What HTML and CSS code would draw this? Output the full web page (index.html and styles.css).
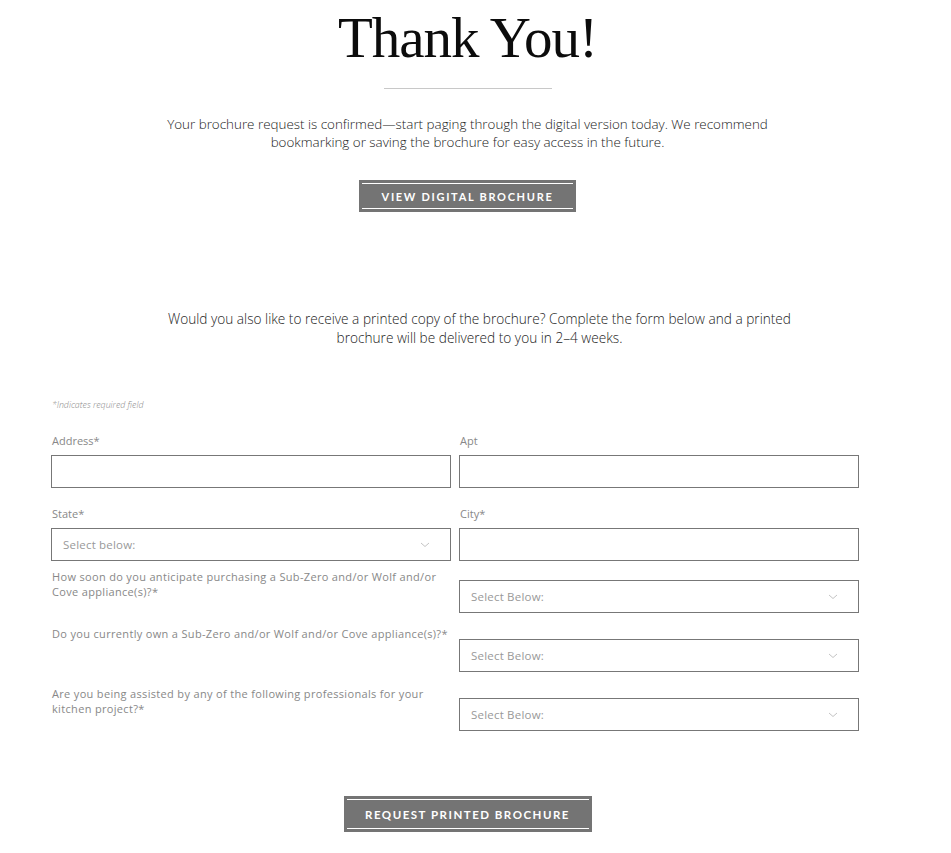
FILE: index.html
```html
<!DOCTYPE html>
<html lang="en">
<head>
<meta charset="utf-8">
<title>Thank You</title>
<link rel="stylesheet" href="styles.css">
</head>
<body>
<main class="page">
  <section class="hero">
    <h1 class="title">Thank You!</h1>
    <hr class="divider">
    <p class="lead">Your brochure request is confirmed—start paging through the digital version today. We recommend<br>bookmarking or saving the brochure for easy access in the future.</p>
    <a class="btn btn-view" href="#">VIEW DIGITAL BROCHURE</a>
  </section>

  <section class="printed">
    <p class="lead lead-2">Would you also like to receive a printed copy of the brochure? Complete the form below and a printed<br>brochure will be delivered to you in 2–4 weeks.</p>
  </section>

  <form class="form">
    <p class="note">*Indicates required field</p>
    <div class="grid">
      <div class="field">
        <label class="label">Address*</label>
        <div class="box"></div>
      </div>
      <div class="field">
        <label class="label">Apt</label>
        <div class="box"></div>
      </div>
      <div class="field">
        <label class="label">State*</label>
        <div class="box select"><span class="ph">Select below:</span><svg class="chev" width="10" height="6" viewBox="0 0 10 6"><path d="M1 1 L5 4.5 L9 1" fill="none" stroke="#c4c4c4" stroke-width="1"/></svg></div>
      </div>
      <div class="field">
        <label class="label">City*</label>
        <div class="box"></div>
      </div>
    </div>
    <div class="qrow q1">
      <p class="qlabel">How soon do you anticipate purchasing a Sub-Zero and/or Wolf and/or Cove appliance(s)?*</p>
      <div class="box select"><span class="ph">Select Below:</span><svg class="chev" width="10" height="6" viewBox="0 0 10 6"><path d="M1 1 L5 4.5 L9 1" fill="none" stroke="#c4c4c4" stroke-width="1"/></svg></div>
    </div>
    <div class="qrow q2">
      <p class="qlabel">Do you currently own a Sub-Zero and/or Wolf and/or Cove appliance(s)?*</p>
      <div class="box select"><span class="ph">Select Below:</span><svg class="chev" width="10" height="6" viewBox="0 0 10 6"><path d="M1 1 L5 4.5 L9 1" fill="none" stroke="#c4c4c4" stroke-width="1"/></svg></div>
    </div>
    <div class="qrow q3">
      <p class="qlabel">Are you being assisted by any of the following professionals for your kitchen project?*</p>
      <div class="box select"><span class="ph">Select Below:</span><svg class="chev" width="10" height="6" viewBox="0 0 10 6"><path d="M1 1 L5 4.5 L9 1" fill="none" stroke="#c4c4c4" stroke-width="1"/></svg></div>
    </div>
  </form>

  <div class="submit">
    <a class="btn btn-request" href="#">REQUEST PRINTED BROCHURE</a>
  </div>
</main>
</body>
</html>
```

FILE: styles.css
```css
* { box-sizing: border-box; }
html, body { margin: 0; padding: 0; background: #fff; }
body {
  font-family: "Open Sans", "Liberation Sans", sans-serif;
  color: #333;
  width: 935px;
}
.page { display: flex; flex-direction: column; }

.hero { display: flex; flex-direction: column; align-items: center; }
.title {
  font-family: "Liberation Serif", "DejaVu Serif", serif;
  font-weight: 400;
  font-size: 57px;
  line-height: 1;
  letter-spacing: -1px;
  color: #0c0c0c;
  margin: 9px 0 0 0;
}
.divider {
  width: 168px;
  border: 0;
  border-top: 1px solid #c8c8c8;
  margin: 22px 0 0 0;
}
.lead {
  font-size: 13.4px;
  font-weight: 300;
  line-height: 18px;
  text-align: center;
  color: #222;
  margin: 26px 0 0 0;
}
.btn {
  display: inline-flex;
  align-items: center;
  justify-content: center;
  background: #747474;
  color: #fff;
  text-decoration: none;
  font-family: "Lato", "Liberation Sans", sans-serif;
  font-weight: 700;
  letter-spacing: 1.7px;
  position: relative;
}
.btn::before, .btn::after {
  content: "";
  position: absolute;
  left: 3px; right: 3px;
  height: 1px;
  background: #fff;
}
.btn::before { top: 3px; }
.btn::after { bottom: 3px; }
.btn-view {
  width: 217px;
  height: 32px;
  font-size: 11px;
  margin-top: 29px;
}

.printed {
  display: flex;
  justify-content: center;
  margin-top: 97px;
  padding-left: 24px;
}
.lead-2 { margin: 0; font-size: 13.65px; line-height: 19px; }

.form {
  margin-left: 51px;
  width: 808px;
  margin-top: 53px;
}
.note {
  font-size: 8.8px;
  font-style: italic;
  font-weight: 300;
  color: #888;
  margin: 0 0 0 1px;
  line-height: 10px;
}
.grid {
  display: grid;
  grid-template-columns: 400px 400px;
  column-gap: 8px;
  row-gap: 19px;
  margin-top: 24px;
}
.field { display: flex; flex-direction: column; }
.label {
  font-size: 11px;
  color: #888;
  line-height: 14px;
  margin: 0 0 7px 1px;
}
.box {
  height: 33px;
  border: 1px solid #777;
  background: #fff;
}
.select {
  display: flex;
  align-items: center;
  justify-content: space-between;
  padding: 0 20px 0 11px;
}
.ph { font-size: 11.5px; color: #999; letter-spacing: 0.2px; }
.chev { display: block; }

.qrow {
  display: grid;
  grid-template-columns: 400px 400px;
  column-gap: 8px;
  align-items: start;
}
.qlabel {
  font-size: 11px;
  letter-spacing: 0.33px;
  color: #888;
  line-height: 15px;
  margin: 0 0 0 1px;
}
.q1 { margin-top: 8px; }
.q1 .box { margin-top: 11px; }
.q2 { margin-top: 13px; }
.q2 .box { margin-top: 13px; }
.q3 { margin-top: 14px; }
.q3 .box { margin-top: 12px; }

.submit { display: flex; justify-content: center; margin-top: 65px; padding-bottom: 20px; }
.btn-request {
  width: 248px;
  height: 36px;
  font-size: 11.5px;
  letter-spacing: 1.5px;
}
```
